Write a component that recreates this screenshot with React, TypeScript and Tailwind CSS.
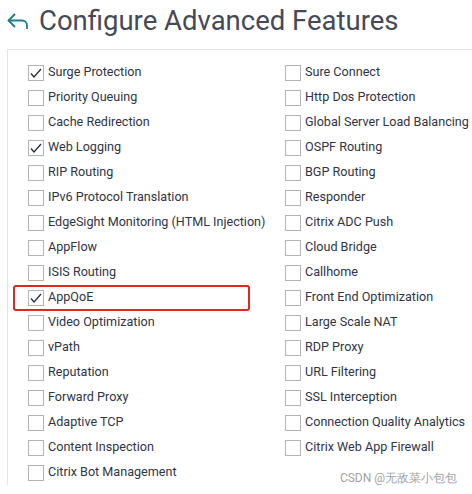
import React from "react"

const LEFT = [
	{ label: "Surge Protection", checked: true },
	{ label: "Priority Queuing" },
	{ label: "Cache Redirection" },
	{ label: "Web Logging", checked: true },
	{ label: "RIP Routing" },
	{ label: "IPv6 Protocol Translation" },
	{ label: "EdgeSight Monitoring (HTML Injection)" },
	{ label: "AppFlow" },
	{ label: "ISIS Routing" },
	{ label: "AppQoE", checked: true, marked: true },
	{ label: "Video Optimization" },
	{ label: "vPath" },
	{ label: "Reputation" },
	{ label: "Forward Proxy" },
	{ label: "Adaptive TCP" },
	{ label: "Content Inspection" },
	{ label: "Citrix Bot Management" },
]

const RIGHT = [
	{ label: "Sure Connect" },
	{ label: "Http Dos Protection" },
	{ label: "Global Server Load Balancing" },
	{ label: "OSPF Routing" },
	{ label: "BGP Routing" },
	{ label: "Responder" },
	{ label: "Citrix ADC Push" },
	{ label: "Cloud Bridge" },
	{ label: "Callhome" },
	{ label: "Front End Optimization" },
	{ label: "Large Scale NAT" },
	{ label: "RDP Proxy" },
	{ label: "URL Filtering" },
	{ label: "SSL Interception" },
	{ label: "Connection Quality Analytics" },
	{ label: "Citrix Web App Firewall" },
]

type Feature = { label: string; checked?: boolean; marked?: boolean }

function Row({ label, checked, marked }: Feature) {
	return (
		<div className="relative flex h-[25px] items-center gap-[4px]">
			{marked && (
				<span className="absolute -left-[15px] top-[0px] h-[26px] w-[237px] rounded-[3px] border-2 border-[#e3241f]" />
			)}
			<span className="flex h-[16px] w-[16px] shrink-0 items-center justify-center border border-[#b4b4b4] bg-white">
				{checked && (
					<svg width="14" height="14" viewBox="0 0 14 14" fill="none">
						<path d="M2 7.5 5 11 12 3" stroke="#1d2b3a" strokeWidth="1.2" />
					</svg>
				)}
			</span>
			<span className="whitespace-nowrap text-[12.6px] text-[#2f3447]">{label}</span>
		</div>
	)
}

export default function App() {
	return (
		<div className="relative h-[494px] w-[472px] overflow-hidden bg-white font-['Roboto',sans-serif]">
			<div className="flex h-[49px] items-center gap-[10px] pl-[7px] pb-[8px]">
				<svg width="22" height="16" viewBox="0 0 22 16" fill="none" stroke="#1f7a8c" strokeWidth="1.8">
					<path d="M8 1 1.5 7.5 8 14" />
					<path d="M1.5 7.5H15a5 5 0 0 1 5 5V16" />
				</svg>
				<h1 className="whitespace-nowrap text-[27.5px] leading-none text-[#454a57]">Configure Advanced Features</h1>
			</div>
			<div className="ml-[7px] flex border-l border-t border-[#e4e4e4] pl-[20px] pt-[10px]">
				<div className="w-[257px] shrink-0">
					{LEFT.map((f) => (
						<Row key={f.label} {...f} />
					))}
				</div>
				<div>
					{RIGHT.map((f) => (
						<Row key={f.label} {...f} />
					))}
				</div>
			</div>
			<span className="absolute bottom-[7px] right-[15px] text-[12px] text-[#a3a3a3]">CSDN @无敌菜小包包</span>
		</div>
	)
}
